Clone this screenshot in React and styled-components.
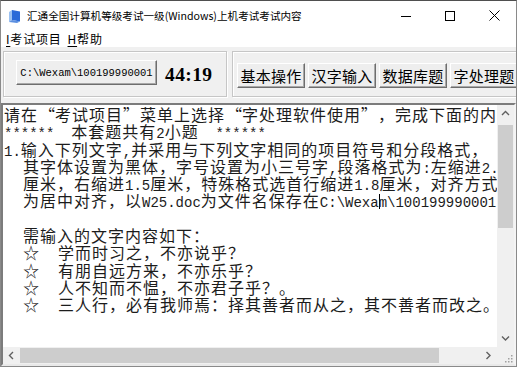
import React from "react";
import styled, { createGlobalStyle } from "styled-components";

const GlobalStyle = createGlobalStyle`
  html, body {
    margin: 0;
    padding: 0;
    background: #fff;
  }
  body {
    font-family: "Noto Sans CJK SC", sans-serif;
  }
`;

const Window = styled.div`
  width: 517px;
  height: 367px;
  box-sizing: border-box;
  border: 1px solid #8a8a8a;
  border-top-color: #4f4f4f;
  background: #f0f0f0;
  display: flex;
  flex-direction: column;
  overflow: hidden;
`;

const TitleBar = styled.div`
  height: 29px;
  flex-shrink: 0;
  background: #fff;
  display: flex;
  align-items: center;
  padding-left: 7px;
`;

const Title = styled.div`
  flex: 1;
  margin-left: 6px;
  font-size: 10.6px;
  color: #000;
  white-space: nowrap;
`;

const Controls = styled.div`
  display: flex;
  height: 100%;
`;

const Ctrl = styled.div`
  width: 44px;
  display: flex;
  align-items: center;
  justify-content: center;
`;

const MenuBar = styled.div`
  height: 17px;
  flex-shrink: 0;
  background: #fff;
  display: flex;
  align-items: center;
  gap: 6px;
  padding-left: 5px;
  font-size: 12px;
  letter-spacing: 0.8px;
  color: #000;
`;

const MenuItem = styled.span`
  white-space: nowrap;
  u {
    text-decoration: underline;
    text-underline-offset: 2px;
  }
`;

const Toolbar = styled.div`
  height: 56px;
  flex-shrink: 0;
  display: flex;
  gap: 5px;
  padding: 4px 0 0 2px;
  box-sizing: border-box;
`;

const GroupBox = styled.div`
  height: 46px;
  box-sizing: border-box;
  border: 1px solid #c6c6c6;
  box-shadow: inset 1px 1px 0 #fff, 1px 1px 0 #fff;
  display: flex;
  flex-shrink: 0;
  align-items: flex-start;
  width: ${(p) => p.$width}px;
  padding: ${(p) => p.$pad};
  gap: ${(p) => p.$gap}px;
`;

const Button = styled.div`
  box-sizing: border-box;
  flex-shrink: 0;
  width: ${(p) => p.$w}px;
  height: ${(p) => p.$h}px;
  display: flex;
  align-items: center;
  justify-content: center;
  background: #eeeeee;
  border: 1px solid;
  border-color: #ffffff #6e6e6e #6e6e6e #ffffff;
  box-shadow: inset -1px -1px 0 #a8a8a8;
  color: #000;
  white-space: nowrap;
`;

const PathText = styled.span`
  font-family: "Liberation Mono", monospace;
  font-size: 10.5px;
`;

const TabText = styled.span`
  font-size: 15px;
  letter-spacing: 0.3px;
`;

const Timer = styled.div`
  margin-left: 8px;
  margin-top: 4px;
  font-family: "Liberation Serif", serif;
  font-weight: bold;
  font-size: 19.5px;
  letter-spacing: 0.4px;
  color: #000;
`;

const Editor = styled.div`
  flex: 1;
  display: grid;
  grid-template-columns: 1fr 17px;
  grid-template-rows: 1fr 17px;
  border: 2px solid;
  border-color: #7c7c7c #f4f4f4 #e9e9e9 #7c7c7c;
  min-height: 0;
`;

const Content = styled.div`
  background: #fff;
  overflow: hidden;
  padding: 1px 0 0 1px;
  font-size: 16px;
  letter-spacing: 1px;
  line-height: 17.3px;
  color: #1c1c1c;
`;

const Line = styled.div`
  white-space: nowrap;
  height: 17.3px;
  padding-left: ${(p) => (p.$indent ? 19 : 0)}px;
`;

const L = styled.span`
  font-family: "Liberation Mono", monospace;
  font-size: 14px;
  letter-spacing: 0;
`;

const Q = styled.span`
  display: inline-block;
  width: 17px;
  letter-spacing: 0;
  text-align: ${(p) => (p.$open ? "right" : "left")};
`;

const Star = styled.span`
  display: inline-block;
  width: 35px;
  letter-spacing: 0;
`;

const Caret = styled.span`
  display: inline-block;
  width: 1px;
  height: 15px;
  margin-right: -1px;
  background: #000;
  vertical-align: -2px;
`;

const VScroll = styled.div`
  background: #f0f0f0;
  display: flex;
  flex-direction: column;
`;

const HScroll = styled.div`
  background: #f0f0f0;
  display: flex;
`;

const Arrow = styled.div`
  width: 17px;
  height: 17px;
  flex-shrink: 0;
  display: flex;
  align-items: center;
  justify-content: center;
`;

const Track = styled.div`
  flex: 1;
  display: flex;
  flex-direction: ${(p) => (p.$vertical ? "column" : "row")};
`;

const Thumb = styled.div`
  background: #cdcdcd;
  ${(p) =>
    p.$vertical
      ? `margin: ${p.$offset}px 1px 0; height: ${p.$size}px;`
      : `margin: 1px 0 1px ${p.$offset}px; width: ${p.$size}px;`}
`;

const Corner = styled.div`
  background: #f0f0f0;
  display: flex;
  align-items: flex-end;
  justify-content: flex-end;
`;

const Chevron = ({ dir }) => {
  const d = {
    up: "M1 5 L4.5 1.5 L8 5",
    down: "M1 1.5 L4.5 5 L8 1.5",
    left: "M5 1 L1.5 4.5 L5 8",
    right: "M1.5 1 L5 4.5 L1.5 8",
  }[dir];
  const vertical = dir === "up" || dir === "down";
  return (
    <svg width={vertical ? 9 : 7} height={vertical ? 7 : 9}>
      <path d={d} fill="none" stroke="#606060" strokeWidth="1.4" />
    </svg>
  );
};

const AppIcon = () => (
  <svg width="13" height="14" viewBox="0 0 13 14">
    <path d="M4 1 L12 2.5 L12 12.5 L4 11 Z" fill="#2a6ad8" />
    <path d="M1 3 L4 1 L4 11 L1 13 Z" fill="#9cc2f2" />
    <path d="M4 11 L12 12.5 L9 14 L1 13 Z" fill="#5b8fe0" />
  </svg>
);

const Grip = () => (
  <svg width="12" height="12">
    {[
      [9, 3],
      [9, 6],
      [6, 6],
      [9, 9],
      [6, 9],
      [3, 9],
    ].map(([x, y]) => (
      <rect key={`${x}-${y}`} x={x} y={y} width="1.5" height="1.5" fill="#a0a0a0" />
    ))}
  </svg>
);

const tabs = ["基本操作", "汉字输入", "数据库题", "字处理题"];

const poems = [
  "学而时习之，不亦说乎？",
  "有朋自远方来，不亦乐乎？",
  "人不知而不愠，不亦君子乎？。",
  "三人行，必有我师焉：择其善者而从之，其不善者而改之。",
];

export default function App() {
  return (
    <>
      <GlobalStyle />
      <Window>
        <TitleBar>
          <AppIcon />
          <Title>汇通全国计算机等级考试一级(Windows)上机考试考试内容</Title>
          <Controls>
            <Ctrl>
              <svg width="10" height="10">
                <rect x="0" y="5" width="10" height="1" fill="#000" />
              </svg>
            </Ctrl>
            <Ctrl>
              <svg width="10" height="10">
                <rect x="0.5" y="0.5" width="9" height="9" fill="none" stroke="#000" />
              </svg>
            </Ctrl>
            <Ctrl>
              <svg width="11" height="11">
                <path d="M0.5 0.5 L10.5 10.5 M10.5 0.5 L0.5 10.5" stroke="#000" strokeWidth="1" />
              </svg>
            </Ctrl>
          </Controls>
        </TitleBar>

        <MenuBar>
          <MenuItem>
            <u>I</u>考试项目
          </MenuItem>
          <MenuItem>
            <u>H</u>帮助
          </MenuItem>
        </MenuBar>

        <Toolbar>
          <GroupBox $width={224} $pad="8px 0 0 12px" $gap={0}>
            <Button $w={141} $h={25}>
              <PathText>C:\Wexam\100199990001</PathText>
            </Button>
            <Timer>44:19</Timer>
          </GroupBox>
          <GroupBox $width={300} $pad="11px 0 0 4px" $gap={3}>
            {tabs.map((t) => (
              <Button key={t} $w={68} $h={25}>
                <TabText>{t}</TabText>
              </Button>
            ))}
          </GroupBox>
        </Toolbar>

        <Editor>
          <Content>
            <Line>
              请在<Q $open>“</Q>考试项目<Q>”</Q>菜单上选择<Q $open>“</Q>字处理软件使用<Q>”</Q>，完成下面的内容：
            </Line>
            <Line>
              <L>******&nbsp;&nbsp;</L>本套题共有<L>2</L>小题<L>&nbsp;&nbsp;******</L>
            </Line>
            <Line>
              <L>1.</L>输入下列文字<L>,</L>并采用与下列文字相同的项目符号和分段格式，
            </Line>
            <Line $indent>
              其字体设置为黑体，字号设置为小三号字<L>,</L>段落格式为<L>:</L>左缩进<L>2.5</L>
            </Line>
            <Line $indent>
              厘米，右缩进<L>1.5</L>厘米，特殊格式选首行缩进<L>1.8</L>厘米，对齐方式为
            </Line>
            <Line $indent>
              为居中对齐，以<L>W25.doc</L>为文件名保存在<L>C:\Wexa</L>
              <Caret />
              <L>m\100199990001</L>中。
            </Line>
            <Line />
            <Line $indent>需输入的文字内容如下：</Line>
            {poems.map((p) => (
              <Line $indent key={p}>
                <Star>☆</Star>
                {p}
              </Line>
            ))}
          </Content>
          <VScroll>
            <Arrow>
              <Chevron dir="up" />
            </Arrow>
            <Track $vertical>
              <Thumb $vertical $offset={3} $size={103} />
            </Track>
            <Arrow>
              <Chevron dir="down" />
            </Arrow>
          </VScroll>
          <HScroll>
            <Arrow>
              <Chevron dir="left" />
            </Arrow>
            <Track>
              <Thumb $offset={0} $size={419} />
            </Track>
            <Arrow>
              <Chevron dir="right" />
            </Arrow>
          </HScroll>
          <Corner>
            <Grip />
          </Corner>
        </Editor>
      </Window>
    </>
  );
}
